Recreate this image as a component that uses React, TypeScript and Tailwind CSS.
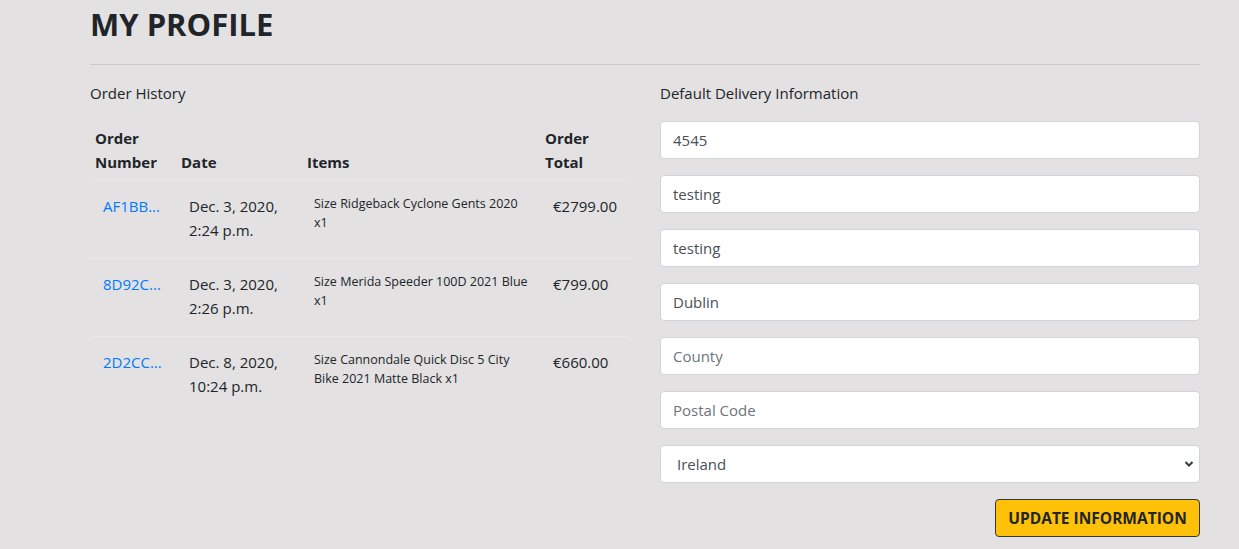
const orders = [
  { num: 'AF1BB...', date: ['Dec. 3, 2020,', '2:24 p.m.'], items: 'Size Ridgeback Cyclone Gents 2020 x1', total: '€2799.00' },
  { num: '8D92C...', date: ['Dec. 3, 2020,', '2:26 p.m.'], items: 'Size Merida Speeder 100D 2021 Blue x1', total: '€799.00' },
  { num: '2D2CC...', date: ['Dec. 8, 2020,', '10:24 p.m.'], items: 'Size Cannondale Quick Disc 5 City Bike 2021 Matte Black x1', total: '€660.00' },
];

const fields = [
  { value: '4545' },
  { value: 'testing' },
  { value: 'testing' },
  { value: 'Dublin' },
  { placeholder: 'County' },
  { placeholder: 'Postal Code' },
];

export default function App() {
  return (
    <div className="min-h-[549px] bg-[#e3e1e2] font-['Open_Sans',sans-serif] text-[15px] leading-6 text-[#212529]">
      <div className="ml-[90px] w-[1110px]">
        <h1 className="pt-[2px] text-[31px] font-bold leading-[44px]">MY PROFILE</h1>
        <hr className="mt-[18px] border-t border-black/10" />

        <div className="flex gap-[30px]">
          <div className="w-[540px]">
            <p className="mt-[16px] leading-6">Order History</p>
            <table className="mt-[19px] w-full table-fixed border-collapse">
              <colgroup>
                <col className="w-[86px]" />
                <col className="w-[126px]" />
                <col className="w-[238px]" />
                <col className="w-[90px]" />
              </colgroup>
              <thead>
                <tr className="border-b border-[#e8e8ea] text-left align-bottom font-bold">
                  <th className="px-[5px] pb-[6px] pt-[2px]">Order Number</th>
                  <th className="px-[5px] pb-[6px] pt-[2px]">Date</th>
                  <th className="px-[5px] pb-[6px] pt-[2px]">Items</th>
                  <th className="px-[5px] pb-[6px] pt-[2px]">Order Total</th>
                </tr>
              </thead>
              <tbody>
                {orders.map((o) => (
                  <tr key={o.num} className="border-b border-[#e8e8ea] align-top last:border-b-0">
                    <td className="pb-[17px] pl-[13px] pr-1 pt-[13px]">
                      <a href="#" className="text-[#007bff]">{o.num}</a>
                    </td>
                    <td className="pb-[16px] pl-[13px] pr-1 pt-[13px]">
                      <div>{o.date[0]}</div>
                      <div>{o.date[1]}</div>
                    </td>
                    <td className="pb-[16px] pl-[12px] pr-[10px] pt-[13px] text-[12.5px] leading-[19px]">{o.items}</td>
                    <td className="pb-[16px] pl-[13px] pr-1 pt-[13px]">{o.total}</td>
                  </tr>
                ))}
              </tbody>
            </table>
          </div>

          <div className="w-[540px]">
            <p className="mt-[16px] leading-6">Default Delivery Information</p>
            <div className="mt-[16px] flex flex-col gap-4">
              {fields.map((f, i) => (
                <input
                  key={i}
                  defaultValue={f.value}
                  placeholder={f.placeholder}
                  className="h-[38px] w-full rounded border border-[#ced4da] bg-white px-3 text-[#495057] placeholder:text-[#6c757d] outline-none"
                />
              ))}
              <div className="relative">
                <select
                  defaultValue="IE"
                  className="h-[38px] w-full appearance-none rounded border border-[#ced4da] bg-white pl-4 pr-8 text-[#495057] outline-none"
                >
                  <option value="IE">Ireland</option>
                </select>
                <svg className="pointer-events-none absolute right-[6px] top-[14px] h-[10px] w-[10px]" viewBox="0 0 10 10" fill="none" stroke="#343a40" strokeWidth="2">
                  <path d="M1.5 3l3.5 3.5L8.5 3" />
                </svg>
              </div>
            </div>
            <div className="mt-4 flex justify-end">
              <button className="h-[38px] w-[205px] rounded border border-[#343a40] bg-[#ffc107] text-[15.5px] font-bold uppercase text-[#212529]">
                Update Information
              </button>
            </div>
          </div>
        </div>
      </div>
    </div>
  );
}
